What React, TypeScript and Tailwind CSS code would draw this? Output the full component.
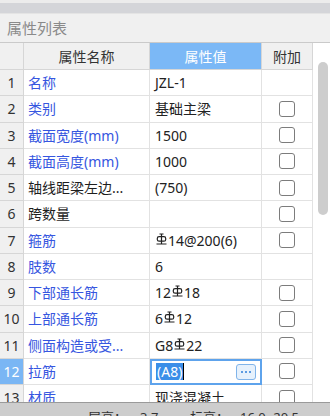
import React from "react";

interface IRow {
    no: number;
    name: string;
    value: React.ReactNode;
    blue: boolean;
    check: boolean;
}

function Rebar() {
    // 三级钢符号
    return (
        <svg width="11" height="12" viewBox="0 0 11 12" className="inline-block mx-[1px] -mt-[3px] align-middle">
            <path d="M3.5 1H7.5M5.5 1V10.5M0.5 11H10.5" stroke="#222" strokeWidth="1.2" fill="none" />
            <rect x="1.3" y="3.6" width="8.4" height="4.6" rx="1.8" stroke="#222" strokeWidth="1.2" fill="none" />
        </svg>
    );
}

const rows: IRow[] = [
    { no: 1, name: "名称", value: "JZL-1", blue: true, check: false },
    { no: 2, name: "类别", value: "基础主梁", blue: true, check: true },
    { no: 3, name: "截面宽度(mm)", value: "1500", blue: true, check: true },
    { no: 4, name: "截面高度(mm)", value: "1000", blue: true, check: true },
    { no: 5, name: "轴线距梁左边...", value: "(750)", blue: false, check: true },
    { no: 6, name: "跨数量", value: "", blue: false, check: true },
    { no: 7, name: "箍筋", value: <><Rebar />14@200(6)</>, blue: true, check: true },
    { no: 8, name: "肢数", value: "6", blue: true, check: false },
    { no: 9, name: "下部通长筋", value: <>12<Rebar />18</>, blue: true, check: true },
    { no: 10, name: "上部通长筋", value: <>6<Rebar />12</>, blue: true, check: true },
    { no: 11, name: "侧面构造或受...", value: <>G8<Rebar />22</>, blue: true, check: true },
    { no: 12, name: "拉筋", value: "(A8)", blue: true, check: true },
    { no: 13, name: "材质", value: "现浇混凝土", blue: true, check: true },
];

function CheckBox() {
    return <span className="block w-[16px] h-[16px] rounded-[3px] border border-[#7c7c7c] bg-white" />;
}

export default function App() {
    return (
        <div
            className="w-[330px] h-[416px] overflow-hidden bg-[#f0f0f0] flex flex-col text-[14px] text-[#222]"
            style={{ fontFamily: '"Noto Sans", "Noto Sans CJK SC", sans-serif' }}
        >
            <div className="h-[3px] bg-[#ececec] shrink-0" />
            <div className="h-[11px] bg-[#d4d5d9] shrink-0 border-b border-[#e4e4e4]" />
            <div className="h-[29px] shrink-0 flex items-center px-[7px] text-[15px] text-[#8a8a8a] border-b border-[#cacaca]">
                属性列表
            </div>

            <div className="flex flex-1 min-h-0">
                <div className="w-[313px] flex flex-col shrink-0">
                    {/* header */}
                    <div className="flex h-[27px] shrink-0 border-b border-[#d6d6d6]">
                        <div className="w-[24px] bg-[#f0f0f0] border-r border-[#d6d6d6]" />
                        <div className="w-[126px] bg-[#f0f0f0] border-r border-[#d6d6d6] flex items-center justify-center text-[#333]">
                            属性名称
                        </div>
                        <div className="w-[112px] bg-[#7bb8f6] border-r border-[#d6d6d6] flex items-center justify-center text-white">
                            属性值
                        </div>
                        <div className="w-[51px] bg-[#f0f0f0] border-r border-[#d6d6d6] flex items-center justify-center text-[#333]">
                            附加
                        </div>
                    </div>

                    {rows.map((row) => {
                        const active = row.no === 12;
                        return (
                            <div key={`row-${row.no}`} className="flex h-[26.25px] shrink-0 bg-white">
                                <div
                                    className={
                                        active
                                            ? "w-[24px] bg-[#7ab6f4] text-white border-r border-b border-[#d6d6d6] flex items-center justify-center"
                                            : "w-[24px] bg-[#f0f0f0] text-[#333] border-r border-b border-[#d6d6d6] flex items-center justify-center"
                                    }
                                >
                                    {row.no}
                                </div>
                                <div
                                    className={
                                        row.blue
                                            ? "w-[126px] pl-[4px] text-[#3656e0] border-r border-b border-[#e2e2e2] flex items-center whitespace-nowrap overflow-hidden"
                                            : "w-[126px] pl-[4px] text-[#1e1e1e] border-r border-b border-[#e2e2e2] flex items-center whitespace-nowrap overflow-hidden"
                                    }
                                >
                                    {row.name}
                                </div>
                                {active ? (
                                    <div className="w-[112px] border-2 border-[#5ea3ec] flex items-center pl-[4px] pr-[4px]">
                                        <span className="bg-[#3a8ee8] text-white leading-[17px] px-[1px]">{row.value}</span>
                                        <span className="w-px h-[17px] bg-black" />
                                        <span className="ml-auto w-[20px] h-[16px] rounded-[3px] border border-[#80b4ea] bg-[#e6f1fc] flex items-center justify-center gap-[2px]">
                                            <span className="w-[2px] h-[2px] bg-[#5b9be2]" />
                                            <span className="w-[2px] h-[2px] bg-[#5b9be2]" />
                                            <span className="w-[2px] h-[2px] bg-[#5b9be2]" />
                                        </span>
                                    </div>
                                ) : (
                                    <div className="w-[112px] pl-[5px] border-r border-b border-[#e2e2e2] flex items-center whitespace-nowrap overflow-hidden">
                                        {row.value}
                                    </div>
                                )}
                                <div className="w-[51px] border-r border-b border-[#e2e2e2] flex items-center justify-center">
                                    {row.check && <CheckBox />}
                                </div>
                            </div>
                        );
                    })}
                </div>
                <div className="flex-1 bg-white relative">
                    <div className="absolute left-[5px] top-[19px] w-[10px] h-[153px] rounded-full bg-[#cdcdcd]" />
                </div>
            </div>

            {/* status bar, cut off by the window edge */}
            <div className="h-[14px] shrink-0 bg-[#cdcdcd] border-t border-[#9a9a9a] overflow-hidden text-[13px] text-[#333] leading-[18px] pt-[5px] flex whitespace-nowrap">
                <span className="ml-[88px] w-[52px]">层高：</span>
                <span className="w-[50px]">3.7</span>
                <span className="w-[50px]">标高：</span>
                <span>16.0~20.5</span>
            </div>
        </div>
    );
}
